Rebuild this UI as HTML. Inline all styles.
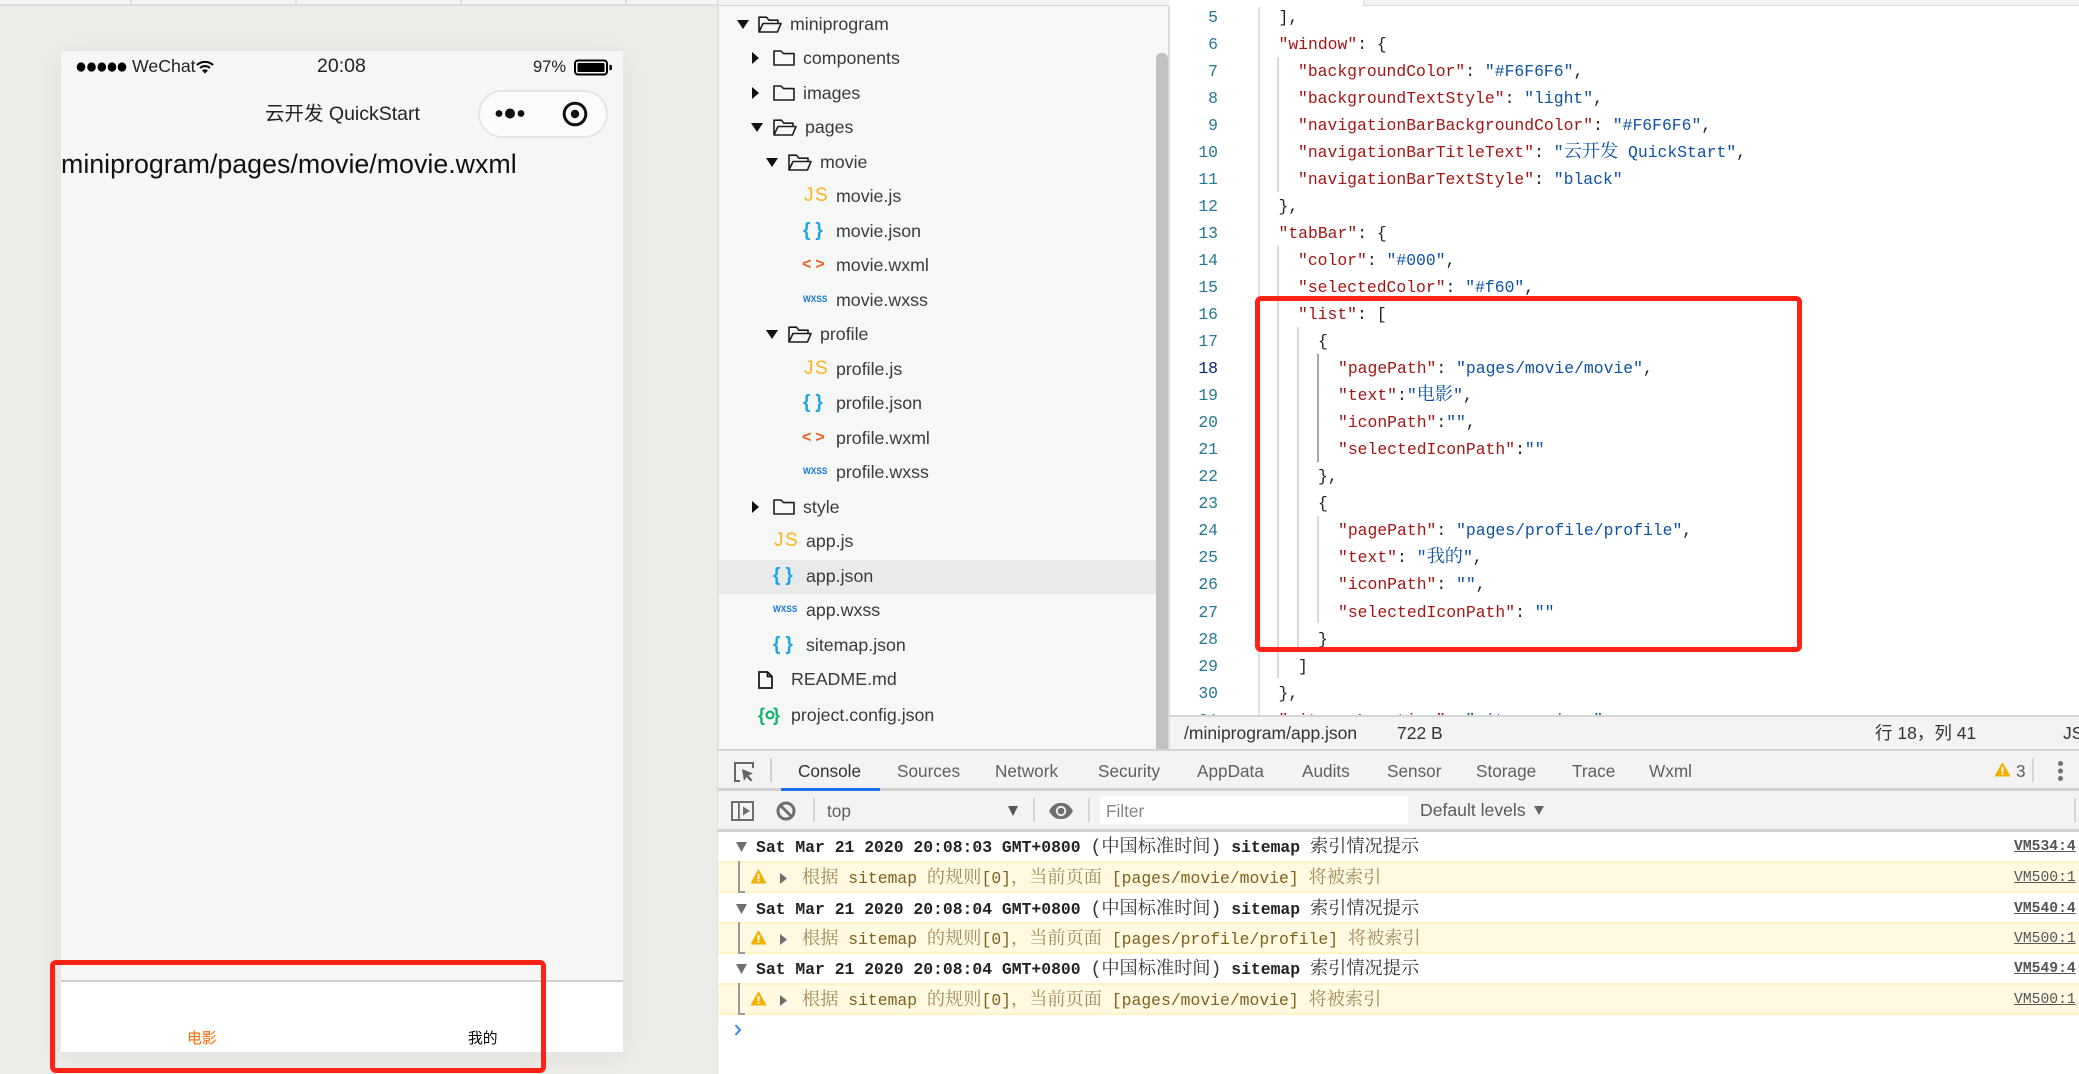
<!DOCTYPE html>
<html lang="zh">
<head>
<meta charset="utf-8">
<title>miniprogram</title>
<style>
html,body{margin:0;padding:0;width:2079px;height:1074px;overflow:hidden;background:#fff}
*{box-sizing:border-box}
.a{position:absolute}
.t{position:absolute;white-space:pre;line-height:26px;height:26px}
body{font-family:"Liberation Sans","Noto Sans CJK SC",sans-serif;color:#333}
#root{position:absolute;left:0;top:0;width:2079px;height:1074px;overflow:hidden}
svg{position:absolute;overflow:visible}
/* tree */
#tree{position:absolute;left:719px;top:6px;width:450px;height:743px;background:#f6f8f8;overflow:hidden}
.r{position:absolute;left:0;height:34.5px;width:437px;font-size:17.8px;line-height:34.5px;color:#3a3a3a;white-space:pre}
.r span{position:absolute;top:0}
.js{font-size:19px;color:#ffb11b;letter-spacing:1.5px;font-weight:400}
.br{font-size:19px;font-weight:700;color:#19a5e6;letter-spacing:5px}
.an{font-size:16px;font-weight:700;color:#f2591c;letter-spacing:4px}
.wx{font-size:9.5px;font-weight:700;color:#1878cf;transform:scaleX(.87);transform-origin:left center}
/* code */
#code{position:absolute;left:1170px;top:7px;width:909px;height:708px;background:#fff;overflow:hidden}
#lines{position:absolute;left:0;top:-3.5px;width:48px;text-align:right;font-family:"Liberation Mono",monospace;font-size:16.4px;line-height:27.05px;color:#237893}
#src{position:absolute;left:0;top:-3.5px;width:900px;font-family:"Liberation Mono","Noto Serif CJK SC",monospace;font-size:16.4px;line-height:27.05px;color:#222}
#src div{height:27.05px;white-space:pre}
.k{color:#a31515}.s{color:#0b51a5}
.c{font-size:18.2px;line-height:1}
.l1{padding-left:108.5px}.l2{padding-left:128px}.l3{padding-left:148px}.l4{padding-left:168px}
.g{position:absolute;width:2px;background:#d9d9d9}
/* console */
.tab{position:absolute;top:758px;font-size:17.2px;line-height:26px;color:#5f5f5f;white-space:pre}
.hd{position:absolute;left:756px;font-family:"Liberation Mono","Noto Serif CJK SC",monospace;font-size:16.4px;font-weight:700;line-height:26px;color:#222;white-space:pre;margin-top:1px}
.hd .c{font-weight:400;color:#333}
.wr{position:absolute;left:718px;width:1361px;height:32px;background:#fff9e2;border-top:2px solid #fff2c4;border-bottom:2px solid #fff2c4}
.wt{position:absolute;left:802px;font-family:"Liberation Mono","Noto Serif CJK SC",monospace;font-size:16.4px;line-height:26px;color:#7f5f1c;white-space:pre;margin-top:1px}
.wt .c{color:#a08a58}
.vm{position:absolute;left:2014px;font-family:"Liberation Mono",monospace;font-size:14.7px;line-height:26px;color:#555;text-decoration:underline;white-space:pre}
.vb{font-weight:700}
.rd{position:absolute;border:5px solid #fe2116;border-radius:6px}
</style>
</head>
<body>
<div id="root">

<svg width="0" height="0" style="position:absolute">
  <defs>
    <symbol id="ad" viewBox="0 0 12 9"><path d="M0 0H12L6 9Z" fill="#111"/></symbol>
    <symbol id="ar" viewBox="0 0 7 12"><path d="M0 0V12L7 6Z" fill="#111"/></symbol>
    <symbol id="fo" viewBox="0 0 24 17"><path d="M1 16V1.2H8.5L11 4.2H20V7.5M1 16L5 7.5H23L19.5 16Z" fill="none" stroke="#1c1c1c" stroke-width="1.6" stroke-linejoin="round"/></symbol>
    <symbol id="fc" viewBox="0 0 22 16"><path d="M1 15V1H8L10.5 3.6H21V15Z" fill="none" stroke="#1c1c1c" stroke-width="1.6" stroke-linejoin="round"/></symbol>
    <symbol id="wa" viewBox="0 0 16 15"><path d="M8 .6L15.8 14.4H.2Z" fill="#f2b000" stroke="#f2b000" stroke-linejoin="round"/><rect x="7" y="4.8" width="2" height="5.4" fill="#fff"/><rect x="7" y="11" width="2" height="2" fill="#fff"/></symbol>
  </defs>
</svg>

<!-- Left simulator panel -->
<div class="a" style="left:0;top:0;width:718px;height:1074px;background:#ecebe7"></div>
<div class="a" style="left:0;top:0;width:718px;height:4px;background:#f4f4f4"></div>
<div class="a" style="left:0;top:4px;width:718px;height:2px;background:#dddddb"></div>
<div class="a" style="left:130px;top:0;width:2px;height:5px;background:#dcdcdc"></div>
<div class="a" style="left:295px;top:0;width:2px;height:5px;background:#dcdcdc"></div>
<div class="a" style="left:460px;top:0;width:2px;height:5px;background:#dcdcdc"></div>
<div class="a" style="left:625px;top:0;width:2px;height:5px;background:#dcdcdc"></div>
<div class="a" style="left:717px;top:0;width:2px;height:1074px;background:#dedede"></div>

<!-- Phone -->
<div class="a" style="left:61px;top:51px;width:562px;height:1001px;background:#f6f6f6;box-shadow:0 4px 26px rgba(0,0,0,.055)"></div>
<svg style="left:76px;top:61px" width="52" height="12"><g fill="#000"><ellipse cx="5" cy="6" rx="4.3" ry="4.6"/><ellipse cx="15.5" cy="6" rx="4.3" ry="4.6"/><ellipse cx="25.8" cy="6" rx="4.3" ry="4.6"/><ellipse cx="36" cy="6" rx="4.3" ry="4.6"/><ellipse cx="46" cy="6" rx="4.3" ry="4.6"/></g></svg>
<div class="t" style="left:132px;top:53px;font-size:17.7px;color:#222">WeChat</div>
<svg style="left:196px;top:60px" width="18" height="14" viewBox="0 0 18 14"><path d="M1 5C5.500 .8 12.500 .8 17 5" fill="none" stroke="#000" stroke-width="2"/><path d="M4 8C6.800 5.500 11.200 5.500 14 8" fill="none" stroke="#000" stroke-width="2"/><path d="M9 13.500L6 10.400C7.700 9 10.300 9 12 10.400Z" fill="#000"/></svg>
<div class="t" style="left:317px;top:53px;font-size:19.5px;color:#222">20:08</div>
<div class="t" style="left:533px;top:54px;font-size:16.5px;color:#222">97%</div>
<svg style="left:574px;top:59px" width="40" height="17" viewBox="0 0 40 17"><rect x="1" y="1.500" width="32" height="14" rx="3" fill="none" stroke="#000" stroke-width="2"/><rect x="3.500" y="4" width="27" height="9" rx="1" fill="#000"/><path d="M35.500 5.500L38 6.500V10.500L35.500 11.500Z" fill="#000"/></svg>
<div class="t" style="left:265px;top:101px;font-size:19.500px;color:#222">云开发 QuickStart</div>
<div class="a" style="left:478px;top:90px;width:130px;height:48px;border:2.500px solid #e6e6e6;border-radius:24px;background:#fbfbfb"></div>
<svg style="left:494px;top:104px" width="34" height="20"><circle cx="5" cy="9.500" r="3.400" fill="#111"/><circle cx="16" cy="9.500" r="5" fill="#111"/><circle cx="27" cy="9.500" r="3.400" fill="#111"/></svg>
<svg style="left:562px;top:101px" width="26" height="26"><circle cx="13" cy="13" r="10.800" fill="none" stroke="#111" stroke-width="3"/><circle cx="13" cy="13" r="4.200" fill="#111"/></svg>
<div class="t" style="left:61px;top:151px;font-size:26.8px;color:#111">miniprogram/pages/movie/movie.wxml</div>

<div class="a" style="left:61px;top:980px;width:562px;height:72px;background:#fff;border-top:2px solid #cfcfcf"></div>
<div class="t" style="left:187px;top:1026px;font-size:14.800px;color:#ff6600">电影</div>
<div class="t" style="left:468px;top:1026px;font-size:14.800px;color:#000">我的</div>
<div class="rd" style="left:50px;top:960px;width:496px;height:113px"></div>

<!-- Top right strip -->
<div class="a" style="left:719px;top:0;width:450px;height:5px;background:#f4f4f4"></div>
<div class="a" style="left:719px;top:5px;width:450px;height:2px;background:#d6d6d6"></div>
<div class="a" style="left:1169px;top:0;width:910px;height:7px;background:#fff"></div>
<div class="a" style="left:1363px;top:0;width:716px;height:6px;background:#f3f3f3;border-bottom:1.500px solid #dcdcdc;border-left:1.500px solid #dcdcdc"></div>

<!-- File tree -->
<div id="tree">
  <div class="r" style="top:.75px"><svg style="left:18px;top:13px" width="12" height="9"><use href="#ad"/></svg><svg style="left:39px;top:9px" width="24" height="17"><use href="#fo"/></svg><span style="left:71px">miniprogram</span></div>
  <div class="r" style="top:35.25px"><svg style="left:33px;top:11px" width="7" height="12"><use href="#ar"/></svg><svg style="left:53.500px;top:9px" width="22" height="16"><use href="#fc"/></svg><span style="left:84px">components</span></div>
  <div class="r" style="top:69.75px"><svg style="left:33px;top:11px" width="7" height="12"><use href="#ar"/></svg><svg style="left:53.500px;top:9px" width="22" height="16"><use href="#fc"/></svg><span style="left:84px">images</span></div>
  <div class="r" style="top:104.25px"><svg style="left:32px;top:13px" width="12" height="9"><use href="#ad"/></svg><svg style="left:53.500px;top:9px" width="24" height="17"><use href="#fo"/></svg><span style="left:86px">pages</span></div>
  <div class="r" style="top:138.75px"><svg style="left:47px;top:13px" width="12" height="9"><use href="#ad"/></svg><svg style="left:68.500px;top:9px" width="24" height="17"><use href="#fo"/></svg><span style="left:101px">movie</span></div>
  <div class="r" style="top:173.25px"><span class="js" style="left:85px">JS</span><span style="left:117px">movie.js</span></div>
  <div class="r" style="top:207.75px"><span class="br" style="left:84px">{}</span><span style="left:117px">movie.json</span></div>
  <div class="r" style="top:242.25px"><span class="an" style="left:83px">&lt;&gt;</span><span style="left:117px">movie.wxml</span></div>
  <div class="r" style="top:276.75px"><span class="wx" style="left:83.500px">WXSS</span><span style="left:117px">movie.wxss</span></div>
  <div class="r" style="top:311.25px"><svg style="left:47px;top:13px" width="12" height="9"><use href="#ad"/></svg><svg style="left:68.500px;top:9px" width="24" height="17"><use href="#fo"/></svg><span style="left:101px">profile</span></div>
  <div class="r" style="top:345.75px"><span class="js" style="left:85px">JS</span><span style="left:117px">profile.js</span></div>
  <div class="r" style="top:380.25px"><span class="br" style="left:84px">{}</span><span style="left:117px">profile.json</span></div>
  <div class="r" style="top:414.75px"><span class="an" style="left:83px">&lt;&gt;</span><span style="left:117px">profile.wxml</span></div>
  <div class="r" style="top:449.25px"><span class="wx" style="left:83.500px">WXSS</span><span style="left:117px">profile.wxss</span></div>
  <div class="r" style="top:483.75px"><svg style="left:33px;top:11px" width="7" height="12"><use href="#ar"/></svg><svg style="left:53.500px;top:9px" width="22" height="16"><use href="#fc"/></svg><span style="left:84px">style</span></div>
  <div class="r" style="top:518.25px"><span class="js" style="left:55px">JS</span><span style="left:87px">app.js</span></div>
  <div class="r" style="top:554px;height:34px;line-height:32px;background:#e9eaea"><span class="br" style="left:54px">{}</span><span style="left:87px">app.json</span></div>
  <div class="r" style="top:587.25px"><span class="wx" style="left:53.500px">WXSS</span><span style="left:87px">app.wxss</span></div>
  <div class="r" style="top:621.75px"><span class="br" style="left:54px">{}</span><span style="left:87px">sitemap.json</span></div>
  <div class="r" style="top:656.25px"><svg style="left:39px;top:9px" width="15" height="18" viewBox="0 0 15 18"><path d="M1 1H9.500L14 5.500V17H1Z M9.500 1V5.500H14" fill="none" stroke="#111" stroke-width="1.700"/></svg><span style="left:72px">README.md</span></div>
  <div class="r" style="top:691.75px"><span style="left:39px;top:0;font-weight:700;font-size:18px;color:#0fb26f;letter-spacing:8px">{}</span><svg style="left:45px;top:11px" width="12" height="12"><circle cx="6" cy="6" r="3.400" fill="none" stroke="#0fb26f" stroke-width="2.200"/></svg><span style="left:72px">project.config.json</span></div>
</div>
<div class="a" style="left:1156px;top:53px;width:12px;height:696px;background:#c1c1c1;border-radius:5px 5px 0 0"></div>
<div class="a" style="left:1168px;top:6px;width:2px;height:743px;background:#dcdcdc"></div>

<!-- Code editor -->
<div id="code">
  <div class="g" style="left:88px;top:0;height:708px;background:#e0e0e0"></div>
  <div class="g" style="left:107px;top:50px;height:135px"></div>
  <div class="g" style="left:107px;top:239px;height:432px"></div>
  <div class="g" style="left:127px;top:320px;height:320px"></div>
  <div class="g" style="left:147px;top:347px;height:108px;background:#a8a8a8"></div>
  <div class="g" style="left:147px;top:509px;height:107px"></div>
  <div id="lines">5<br>6<br>7<br>8<br>9<br>10<br>11<br>12<br>13<br>14<br>15<br>16<br>17<br><span style="color:#0b216f">18</span><br>19<br>20<br>21<br>22<br>23<br>24<br>25<br>26<br>27<br>28<br>29<br>30<br>31</div>
  <div id="src"><div class="l1">],</div><div class="l1"><span class="k">"window"</span>: {</div><div class="l2"><span class="k">"backgroundColor"</span>: <span class="s">"#F6F6F6"</span>,</div><div class="l2"><span class="k">"backgroundTextStyle"</span>: <span class="s">"light"</span>,</div><div class="l2"><span class="k">"navigationBarBackgroundColor"</span>: <span class="s">"#F6F6F6"</span>,</div><div class="l2"><span class="k">"navigationBarTitleText"</span>: <span class="s">"<span class="c">云开发</span> QuickStart"</span>,</div><div class="l2"><span class="k">"navigationBarTextStyle"</span>: <span class="s">"black"</span></div><div class="l1">},</div><div class="l1"><span class="k">"tabBar"</span>: {</div><div class="l2"><span class="k">"color"</span>: <span class="s">"#000"</span>,</div><div class="l2"><span class="k">"selectedColor"</span>: <span class="s">"#f60"</span>,</div><div class="l2"><span class="k">"list"</span>: [</div><div class="l3">{</div><div class="l4"><span class="k">"pagePath"</span>: <span class="s">"pages/movie/movie"</span>,</div><div class="l4"><span class="k">"text"</span>:<span class="s">"<span class="c">电影</span>"</span>,</div><div class="l4"><span class="k">"iconPath"</span>:<span class="s">""</span>,</div><div class="l4"><span class="k">"selectedIconPath"</span>:<span class="s">""</span></div><div class="l3">},</div><div class="l3">{</div><div class="l4"><span class="k">"pagePath"</span>: <span class="s">"pages/profile/profile"</span>,</div><div class="l4"><span class="k">"text"</span>: <span class="s">"<span class="c">我的</span>"</span>,</div><div class="l4"><span class="k">"iconPath"</span>: <span class="s">""</span>,</div><div class="l4"><span class="k">"selectedIconPath"</span>: <span class="s">""</span></div><div class="l3">}</div><div class="l2">]</div><div class="l1">},</div><div class="l1"><span class="k">"sitemapLocation"</span>: <span class="s">"sitemap.json"</span></div></div>
</div>
<div class="rd" style="left:1255px;top:296px;width:547px;height:356px"></div>

<!-- Editor status bar -->
<div class="a" style="left:1170px;top:715px;width:909px;height:34px;background:#f3f3f3;border-top:2px solid #d6d6d6"></div>
<div class="t" style="left:1184px;top:720px;font-size:17.500px;color:#333">/miniprogram/app.json</div>
<div class="t" style="left:1397px;top:720px;font-size:17.500px;color:#333">722 B</div>
<div class="t" style="left:1875px;top:720px;font-size:17.500px;color:#333">行 18，列 41</div>
<div class="t" style="left:2063px;top:720px;font-size:17.500px;color:#333">JS</div>

<!-- Devtools tab bar -->
<div class="a" style="left:718px;top:749px;width:1361px;height:2px;background:#d4d4d4"></div>
<div class="a" style="left:718px;top:751px;width:1361px;height:37px;background:#f3f3f3"></div>
<div class="a" style="left:718px;top:788px;width:1361px;height:3px;background:#d2d2d2"></div>
<svg style="left:733px;top:761px" width="22" height="22" viewBox="0 0 22 22"><path d="M7 20H2V2H20V7" fill="none" stroke="#666" stroke-width="2"/><path d="M9 8L20 12.500L15.500 14.500L19.500 19L17.500 20.500L13.500 16L11 20Z" fill="#666"/></svg>
<div class="a" style="left:770px;top:758px;width:2px;height:24px;background:#d0d0d0"></div>
<div class="tab" style="left:798px;color:#333">Console</div>
<div class="a" style="left:781px;top:788px;width:99px;height:3px;background:#1a73e8"></div>
<div class="tab" style="left:897px">Sources</div>
<div class="tab" style="left:995px">Network</div>
<div class="tab" style="left:1098px">Security</div>
<div class="tab" style="left:1197px">AppData</div>
<div class="tab" style="left:1302px">Audits</div>
<div class="tab" style="left:1387px">Sensor</div>
<div class="tab" style="left:1476px">Storage</div>
<div class="tab" style="left:1572px">Trace</div>
<div class="tab" style="left:1649px">Wxml</div>
<svg style="left:1995px;top:762px" width="15" height="15"><use href="#wa"/></svg>
<div class="tab" style="left:2016px">3</div>
<div class="a" style="left:2032px;top:758px;width:1.500px;height:24px;background:#d4d4d4"></div>
<svg style="left:2056px;top:760px" width="9" height="22"><circle cx="4.500" cy="3.500" r="2.500" fill="#6e6e6e"/><circle cx="4.500" cy="11" r="2.500" fill="#6e6e6e"/><circle cx="4.500" cy="18.500" r="2.500" fill="#6e6e6e"/></svg>

<!-- Filter row -->
<div class="a" style="left:718px;top:791px;width:1361px;height:38px;background:#f3f3f3"></div>
<div class="a" style="left:718px;top:829px;width:1361px;height:3px;background:#d2d2d2"></div>
<svg style="left:731px;top:801px" width="23" height="20" viewBox="0 0 23 20"><rect x="1" y="1" width="21" height="18" fill="none" stroke="#6e6e6e" stroke-width="2"/><rect x="7" y="1" width="1.800" height="18" fill="#6e6e6e"/><path d="M12 5.500L19 10L12 14.500Z" fill="#6e6e6e"/></svg>
<svg style="left:776px;top:801px" width="20" height="20" viewBox="0 0 20 20"><circle cx="10" cy="10" r="8" fill="none" stroke="#6e6e6e" stroke-width="3"/><path d="M4.500 4.500L15.500 15.500" stroke="#6e6e6e" stroke-width="3"/></svg>
<div class="a" style="left:813px;top:798px;width:2px;height:24px;background:#d4d4d4"></div>
<div class="tab" style="left:827px;top:798px;color:#5f5f5f">top</div>
<svg style="left:1008px;top:806px" width="10" height="10"><path d="M0 0H10L5 10Z" fill="#555"/></svg>
<div class="a" style="left:1033px;top:798px;width:2px;height:24px;background:#d4d4d4"></div>
<svg style="left:1049px;top:802px" width="24" height="18" viewBox="0 0 24 18"><path d="M0 9C4 2 8 1 12 1S20 2 24 9C20 16 16 17 12 17S4 16 0 9Z" fill="#6e6e6e"/><circle cx="12" cy="9" r="5.200" fill="#f3f3f3"/><circle cx="12" cy="9" r="3.300" fill="#6e6e6e"/></svg>
<div class="a" style="left:1088px;top:798px;width:2px;height:24px;background:#d4d4d4"></div>
<div class="a" style="left:1100px;top:796px;width:308px;height:28px;background:#fff"></div>
<div class="tab" style="left:1106px;top:798px;color:#858585">Filter</div>
<div class="tab" style="left:1420px;top:797px;color:#5a5a5a;font-size:17.6px">Default levels</div>
<svg style="left:1534px;top:806px" width="10" height="9"><path d="M0 0H10L5 9Z" fill="#666"/></svg>
<div class="a" style="left:2074px;top:798px;width:2px;height:24px;background:#d4d4d4"></div>

<!-- Console output -->
<div class="a" style="left:718px;top:832px;width:1361px;height:242px;background:#fff"></div>

<svg style="left:736px;top:842px" width="11" height="10"><path d="M0 0H11L5.500 10Z" fill="#6e6e6e"/></svg>
<div class="hd" style="top:834px">Sat Mar 21 2020 20:08:03 GMT+0800 <span class="c">(中国标准时间)</span> sitemap <span class="c">索引情况提示</span></div>
<div class="vm vb" style="top:834px">VM534:4</div>
<div class="wr" style="top:861px"></div>
<div class="a" style="left:738px;top:861px;width:2px;height:32px;background:#9a9a9a"></div><div class="a" style="left:738px;top:891px;width:7px;height:2px;background:#9a9a9a"></div>
<svg style="left:751px;top:869px" width="15" height="15"><use href="#wa"/></svg>
<svg style="left:780px;top:873px" width="7" height="11"><path d="M0 0V11L7 5.500Z" fill="#6e6e6e"/></svg>
<div class="wt" style="top:865px"><span class="c">根据</span> sitemap <span class="c">的规则</span>[0]<span class="c">，当前页面</span> [pages/movie/movie] <span class="c">将被索引</span></div>
<div class="vm" style="top:865px">VM500:1</div>

<svg style="left:736px;top:904px" width="11" height="10"><path d="M0 0H11L5.500 10Z" fill="#6e6e6e"/></svg>
<div class="hd" style="top:896px">Sat Mar 21 2020 20:08:04 GMT+0800 <span class="c">(中国标准时间)</span> sitemap <span class="c">索引情况提示</span></div>
<div class="vm vb" style="top:896px">VM540:4</div>
<div class="wr" style="top:922px"></div>
<div class="a" style="left:738px;top:922px;width:2px;height:32px;background:#9a9a9a"></div><div class="a" style="left:738px;top:952px;width:7px;height:2px;background:#9a9a9a"></div>
<svg style="left:751px;top:930px" width="15" height="15"><use href="#wa"/></svg>
<svg style="left:780px;top:934px" width="7" height="11"><path d="M0 0V11L7 5.500Z" fill="#6e6e6e"/></svg>
<div class="wt" style="top:926px"><span class="c">根据</span> sitemap <span class="c">的规则</span>[0]<span class="c">，当前页面</span> [pages/profile/profile] <span class="c">将被索引</span></div>
<div class="vm" style="top:926px">VM500:1</div>

<svg style="left:736px;top:964px" width="11" height="10"><path d="M0 0H11L5.500 10Z" fill="#6e6e6e"/></svg>
<div class="hd" style="top:956px">Sat Mar 21 2020 20:08:04 GMT+0800 <span class="c">(中国标准时间)</span> sitemap <span class="c">索引情况提示</span></div>
<div class="vm vb" style="top:956px">VM549:4</div>
<div class="wr" style="top:983px"></div>
<div class="a" style="left:738px;top:983px;width:2px;height:32px;background:#9a9a9a"></div><div class="a" style="left:738px;top:1013px;width:7px;height:2px;background:#9a9a9a"></div>
<svg style="left:751px;top:991px" width="15" height="15"><use href="#wa"/></svg>
<svg style="left:780px;top:995px" width="7" height="11"><path d="M0 0V11L7 5.500Z" fill="#6e6e6e"/></svg>
<div class="wt" style="top:987px"><span class="c">根据</span> sitemap <span class="c">的规则</span>[0]<span class="c">，当前页面</span> [pages/movie/movie] <span class="c">将被索引</span></div>
<div class="vm" style="top:987px">VM500:1</div>

<svg style="left:734px;top:1024px" width="8" height="12"><path d="M1.500 1L6 6L1.500 11" fill="none" stroke="#3b82f0" stroke-width="2"/></svg>

</div>
</body>
</html>
